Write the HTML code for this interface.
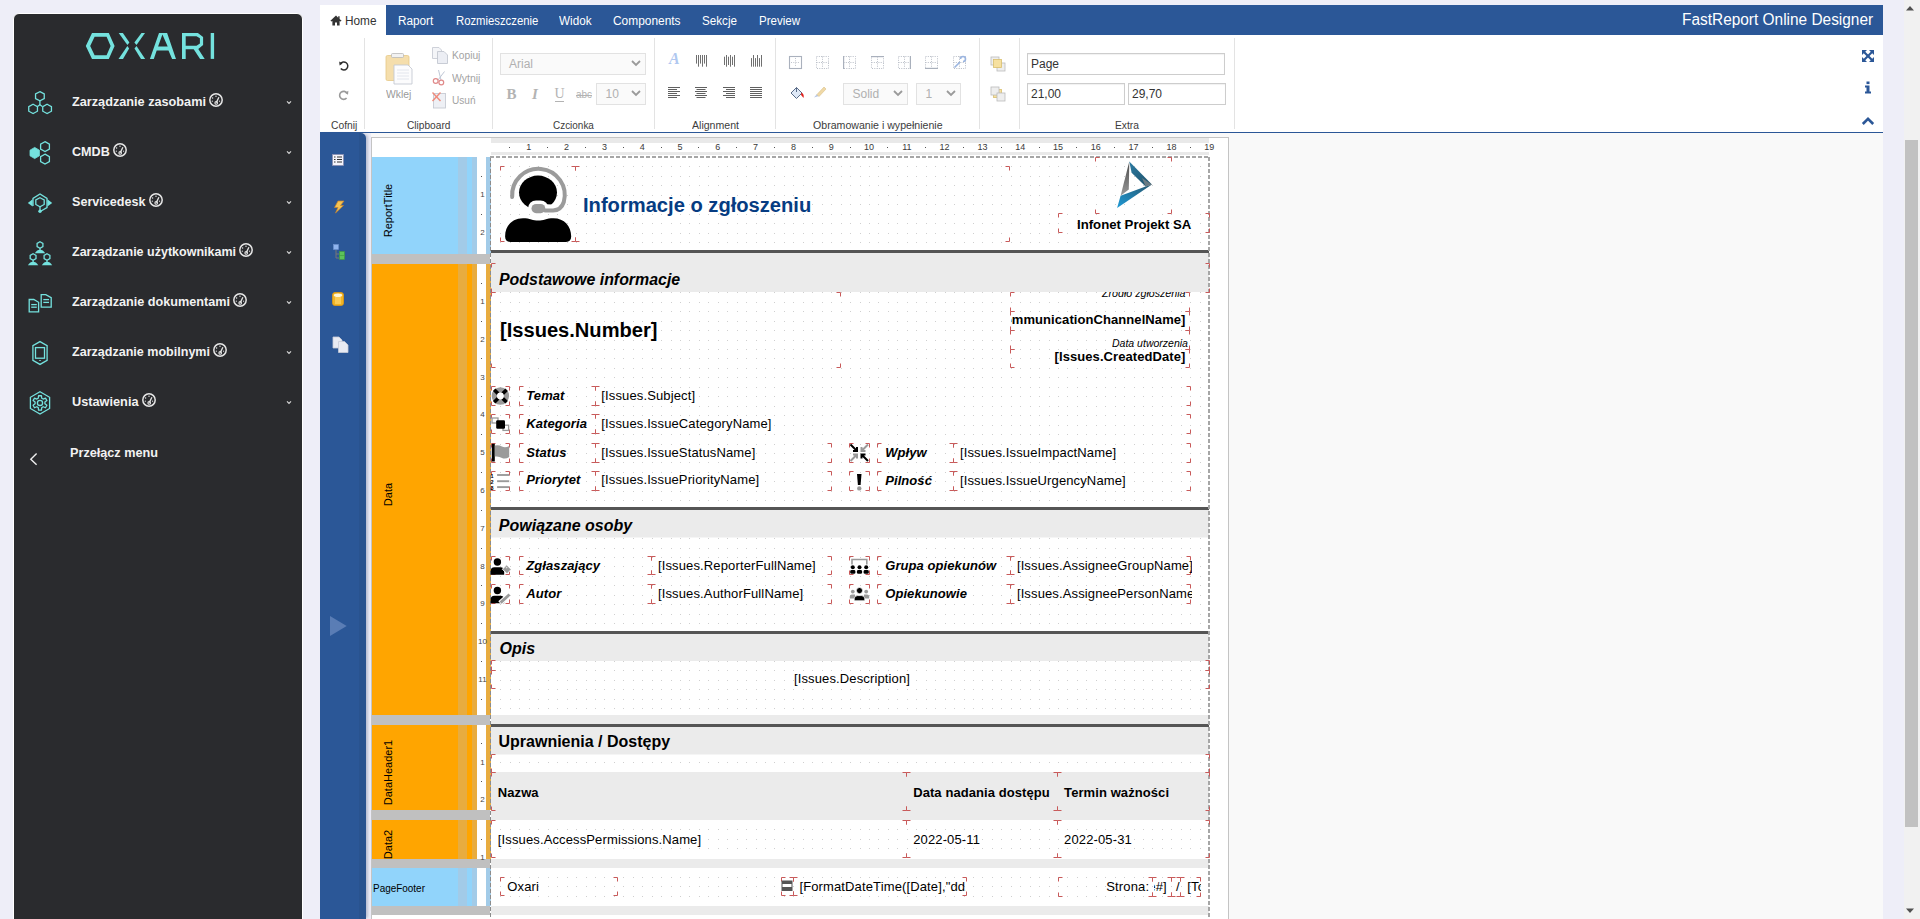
<!DOCTYPE html>
<html><head><meta charset="utf-8"><title>FastReport</title>
<style>
*{margin:0;padding:0;box-sizing:border-box}
html,body{width:1920px;height:919px;overflow:hidden;background:#eeeef8;font-family:"Liberation Sans",sans-serif;position:relative}
.a{position:absolute;display:block}
.t{position:absolute;white-space:nowrap;line-height:1;transform-origin:0 0}
svg{overflow:visible}
</style></head><body>
<div class="a" style="left:13px;top:13px;width:290px;height:930px;background:#2a2b2e;border:1px solid #fff;border-radius:6px;"></div>
<svg class="a" style="left:0;top:0" width="300" height="80"><path d="M85.8,46 L92,33 L108.8,33 L114.6,46 L108.8,58.9 L92,58.9 Z M90.2,46 L94.6,36.7 L106.6,36.7 L110.6,46 L106.6,55.2 L94.6,55.2 Z" fill="#74e2de" fill-rule="evenodd"/><polygon points="118.7,33.1 122.9,33.1 129.4,42.4 127.4,45" fill="#74e2de" fill-rule="evenodd"/><polygon points="127.4,46 129.1,48.5 123,58.9 118.5,58.9" fill="#74e2de" fill-rule="evenodd"/><polygon points="141.5,33.1 145,33.1 136.5,45 134.4,42.4" fill="#74e2de" fill-rule="evenodd"/><polygon points="136.5,46 134.5,48.6 141,58.9 145.2,58.9" fill="#74e2de" fill-rule="evenodd"/><path d="M149.9,58.9 L159,33 L167.1,33 L176,58.9 L172.1,58.9 L168.5,50.4 L156.7,50.4 L153.8,58.9 Z M158.1,46.6 L162.4,34.6 L167.7,46.6 Z" fill="#74e2de" fill-rule="evenodd"/><path d="M182,33 L197.9,33 L203.1,37.1 L203.1,44.9 L198.3,49 L204.7,58.9 L200.1,58.9 L193.7,49.3 L185.7,49.3 L185.7,58.9 L182,58.9 Z M185.7,36.2 L196.5,36.2 L199.9,38.3 L199.9,43.5 L196.5,45.8 L185.7,45.8 Z" fill="#74e2de" fill-rule="evenodd"/><rect x="210.7" y="33" width="3.4" height="25.9" fill="#74e2de"/></svg>
<svg class="a" style="left:24px;top:85px;" width="32" height="32" viewBox="0 0 32 32"><polygon points="15.9,6.65 20.25,8.95 20.25,13.55 15.9,15.85 11.55,13.55 11.55,8.95" stroke="#74e2de" stroke-width="1.3" fill="none"/><polygon points="9.1,19.299999999999997 13.45,21.599999999999998 13.45,26.2 9.1,28.5 4.75,26.2 4.75,21.599999999999998" stroke="#74e2de" stroke-width="1.3" fill="none"/><polygon points="23.1,19.299999999999997 27.450000000000003,21.599999999999998 27.450000000000003,26.2 23.1,28.5 18.75,26.2 18.75,21.599999999999998" stroke="#74e2de" stroke-width="1.3" fill="none"/><polyline points="13.45,21.6 15.9,19.8 18.35,21.6" stroke="#74e2de" stroke-width="1.3" fill="none"/><line x1="15.9" y1="15.9" x2="15.9" y2="19.9" stroke="#74e2de" stroke-width="1.3" fill="none"/></svg>
<div class="t" style="left:71.60px;top:95.20px;font-size:13px;color:#f2f2f2;font-weight:bold;transform:scaleX(0.9761);">Zarządzanie zasobami</div>
<svg class="a" style="left:209.2px;top:93px;" width="14" height="14" viewBox="0 0 14 14"><circle cx="7" cy="7" r="6.2" fill="none" stroke="#e6e6e6" stroke-width="1.5"/><circle cx="3.6" cy="5" r="0.7" fill="#e6e6e6"/><circle cx="7" cy="3.3" r="0.7" fill="#e6e6e6"/><circle cx="3.3" cy="8.2" r="0.6" fill="#e6e6e6"/><circle cx="10.6" cy="8.2" r="0.6" fill="#e6e6e6"/><line x1="7.3" y1="9.6" x2="9.9" y2="4.3" stroke="#e6e6e6" stroke-width="1.3"/><circle cx="7.2" cy="9.9" r="1.3" fill="none" stroke="#e6e6e6" stroke-width="1.1"/></svg>
<svg class="a" style="left:286px;top:99.5px;" width="6" height="5" viewBox="0 0 6 5"><polyline points="1,1.3 3,3.3 5,1.3" fill="none" stroke="#d8d8d8" stroke-width="1.2"/></svg>
<svg class="a" style="left:24px;top:135px;" width="32" height="32" viewBox="0 0 32 32"><polygon points="10.7,12.4 15.399999999999999,15.2 15.399999999999999,20.8 10.7,23.6 5.999999999999999,20.8 5.999999999999999,15.2" fill="#74e2de" stroke="#74e2de" stroke-width="0.8"/><polygon points="21,6.65 25.4,9.100000000000001 25.4,14.0 21,16.450000000000003 16.6,14.0 16.6,9.100000000000001" stroke="#74e2de" stroke-width="1.3" fill="none"/><polygon points="21,19.15 25.4,21.6 25.4,26.5 21,28.950000000000003 16.6,26.5 16.6,21.6" stroke="#74e2de" stroke-width="1.3" fill="none"/></svg>
<div class="t" style="left:71.60px;top:145.20px;font-size:13px;color:#f2f2f2;font-weight:bold;transform:scaleX(0.9692);">CMDB</div>
<svg class="a" style="left:112.99999999999999px;top:143px;" width="14" height="14" viewBox="0 0 14 14"><circle cx="7" cy="7" r="6.2" fill="none" stroke="#e6e6e6" stroke-width="1.5"/><circle cx="3.6" cy="5" r="0.7" fill="#e6e6e6"/><circle cx="7" cy="3.3" r="0.7" fill="#e6e6e6"/><circle cx="3.3" cy="8.2" r="0.6" fill="#e6e6e6"/><circle cx="10.6" cy="8.2" r="0.6" fill="#e6e6e6"/><line x1="7.3" y1="9.6" x2="9.9" y2="4.3" stroke="#e6e6e6" stroke-width="1.3"/><circle cx="7.2" cy="9.9" r="1.3" fill="none" stroke="#e6e6e6" stroke-width="1.1"/></svg>
<svg class="a" style="left:286px;top:149.5px;" width="6" height="5" viewBox="0 0 6 5"><polyline points="1,1.3 3,3.3 5,1.3" fill="none" stroke="#d8d8d8" stroke-width="1.2"/></svg>
<svg class="a" style="left:24px;top:185px;" width="32" height="32" viewBox="0 0 32 32"><polyline points="9,21 9,13.4 16,9 23,13.4 23,22.6 17,26" stroke="#74e2de" stroke-width="1.3" fill="none"/><polygon points="8.6,14.2 3.8,18 8.6,21.6" fill="#74e2de"/><polygon points="23.4,14.2 28.2,18 23.4,21.6" fill="#74e2de"/><polygon points="16,12.7 20.2,14.95 20.2,19.45 16,21.7 11.8,19.45 11.8,14.95" stroke="#74e2de" stroke-width="1.3" fill="none"/><line x1="16" y1="21.7" x2="16" y2="25" stroke="#74e2de" stroke-width="1.3" fill="none"/><circle cx="16" cy="26.2" r="1.7" fill="#74e2de"/></svg>
<div class="t" style="left:71.60px;top:195.20px;font-size:13px;color:#f2f2f2;font-weight:bold;transform:scaleX(0.9681);">Servicedesk</div>
<svg class="a" style="left:148.7px;top:193px;" width="14" height="14" viewBox="0 0 14 14"><circle cx="7" cy="7" r="6.2" fill="none" stroke="#e6e6e6" stroke-width="1.5"/><circle cx="3.6" cy="5" r="0.7" fill="#e6e6e6"/><circle cx="7" cy="3.3" r="0.7" fill="#e6e6e6"/><circle cx="3.3" cy="8.2" r="0.6" fill="#e6e6e6"/><circle cx="10.6" cy="8.2" r="0.6" fill="#e6e6e6"/><line x1="7.3" y1="9.6" x2="9.9" y2="4.3" stroke="#e6e6e6" stroke-width="1.3"/><circle cx="7.2" cy="9.9" r="1.3" fill="none" stroke="#e6e6e6" stroke-width="1.1"/></svg>
<svg class="a" style="left:286px;top:199.5px;" width="6" height="5" viewBox="0 0 6 5"><polyline points="1,1.3 3,3.3 5,1.3" fill="none" stroke="#d8d8d8" stroke-width="1.2"/></svg>
<svg class="a" style="left:24px;top:235px;" width="32" height="32" viewBox="0 0 32 32"><polygon points="16,6.7 18.9,8.35 18.9,11.65 16,13.3 13.1,11.65 13.1,8.35" stroke="#74e2de" stroke-width="1.3" fill="none" stroke-width="1.4"/><line x1="16" y1="13.3" x2="16" y2="15" stroke="#74e2de" stroke-width="1.3" fill="none"/><path d="M10.8,18.2 Q13,14.8 16,14.8 Q19,14.8 21.2,18.2 Z" fill="#74e2de"/><polygon points="9.1,18.7 12.0,20.35 12.0,23.65 9.1,25.3 6.199999999999999,23.65 6.199999999999999,20.35" stroke="#74e2de" stroke-width="1.3" fill="none" stroke-width="1.4"/><line x1="9.1" y1="25.3" x2="9.1" y2="27" stroke="#74e2de" stroke-width="1.3" fill="none"/><path d="M3.8999999999999995,30.2 Q6.1,26.8 9.1,26.8 Q12.1,26.8 14.3,30.2 Z" fill="#74e2de"/><polygon points="23,18.7 25.9,20.35 25.9,23.65 23,25.3 20.1,23.65 20.1,20.35" stroke="#74e2de" stroke-width="1.3" fill="none" stroke-width="1.4"/><line x1="23" y1="25.3" x2="23" y2="27" stroke="#74e2de" stroke-width="1.3" fill="none"/><path d="M17.8,30.2 Q20,26.8 23,26.8 Q26,26.8 28.2,30.2 Z" fill="#74e2de"/></svg>
<div class="t" style="left:71.60px;top:245.20px;font-size:13px;color:#f2f2f2;font-weight:bold;transform:scaleX(0.9619);">Zarządzanie użytkownikami</div>
<svg class="a" style="left:239.2px;top:243px;" width="14" height="14" viewBox="0 0 14 14"><circle cx="7" cy="7" r="6.2" fill="none" stroke="#e6e6e6" stroke-width="1.5"/><circle cx="3.6" cy="5" r="0.7" fill="#e6e6e6"/><circle cx="7" cy="3.3" r="0.7" fill="#e6e6e6"/><circle cx="3.3" cy="8.2" r="0.6" fill="#e6e6e6"/><circle cx="10.6" cy="8.2" r="0.6" fill="#e6e6e6"/><line x1="7.3" y1="9.6" x2="9.9" y2="4.3" stroke="#e6e6e6" stroke-width="1.3"/><circle cx="7.2" cy="9.9" r="1.3" fill="none" stroke="#e6e6e6" stroke-width="1.1"/></svg>
<svg class="a" style="left:286px;top:249.5px;" width="6" height="5" viewBox="0 0 6 5"><polyline points="1,1.3 3,3.3 5,1.3" fill="none" stroke="#d8d8d8" stroke-width="1.2"/></svg>
<svg class="a" style="left:24px;top:285px;" width="32" height="32" viewBox="0 0 32 32"><path d="M5.2,14.5 L9.8,14.5 L14.6,17.3 L14.6,26.9 L5.2,26.9 Z" stroke="#74e2de" stroke-width="1.3" fill="none" stroke-width="1.5"/><line x1="7.2" y1="19.6" x2="12.8" y2="19.6" stroke="#74e2de" stroke-width="1.3" fill="none" stroke-width="1.1"/><line x1="7.2" y1="22.2" x2="12.8" y2="22.2" stroke="#74e2de" stroke-width="1.3" fill="none" stroke-width="1.1"/><path d="M17.2,9.7 L21.8,9.7 L27.2,12.7 L27.2,22.2 L17.2,22.2 Z" stroke="#74e2de" stroke-width="1.3" fill="none" stroke-width="1.5"/><line x1="19.3" y1="14.6" x2="25" y2="14.6" stroke="#74e2de" stroke-width="1.3" fill="none" stroke-width="1.1"/><line x1="19.3" y1="17.4" x2="25" y2="17.4" stroke="#74e2de" stroke-width="1.3" fill="none" stroke-width="1.1"/></svg>
<div class="t" style="left:71.60px;top:295.20px;font-size:13px;color:#f2f2f2;font-weight:bold;transform:scaleX(0.9720);">Zarządzanie dokumentami</div>
<svg class="a" style="left:233.2px;top:293px;" width="14" height="14" viewBox="0 0 14 14"><circle cx="7" cy="7" r="6.2" fill="none" stroke="#e6e6e6" stroke-width="1.5"/><circle cx="3.6" cy="5" r="0.7" fill="#e6e6e6"/><circle cx="7" cy="3.3" r="0.7" fill="#e6e6e6"/><circle cx="3.3" cy="8.2" r="0.6" fill="#e6e6e6"/><circle cx="10.6" cy="8.2" r="0.6" fill="#e6e6e6"/><line x1="7.3" y1="9.6" x2="9.9" y2="4.3" stroke="#e6e6e6" stroke-width="1.3"/><circle cx="7.2" cy="9.9" r="1.3" fill="none" stroke="#e6e6e6" stroke-width="1.1"/></svg>
<svg class="a" style="left:286px;top:299.5px;" width="6" height="5" viewBox="0 0 6 5"><polyline points="1,1.3 3,3.3 5,1.3" fill="none" stroke="#d8d8d8" stroke-width="1.2"/></svg>
<svg class="a" style="left:24px;top:335px;" width="32" height="32" viewBox="0 0 32 32"><polygon points="16,6.6 23.1,10.6 23.1,25.4 16,29.4 8.9,25.4 8.9,10.6" stroke="#74e2de" stroke-width="1.3" fill="none" stroke-width="1.4"/><rect x="11.5" y="12.6" width="9" height="10.6" stroke="#74e2de" stroke-width="1.3" fill="none"/><ellipse cx="16" cy="25.5" rx="1" ry="0.6" fill="#74e2de"/></svg>
<div class="t" style="left:71.60px;top:345.20px;font-size:13px;color:#f2f2f2;font-weight:bold;transform:scaleX(0.9648);">Zarządzanie mobilnymi</div>
<svg class="a" style="left:213.2px;top:343px;" width="14" height="14" viewBox="0 0 14 14"><circle cx="7" cy="7" r="6.2" fill="none" stroke="#e6e6e6" stroke-width="1.5"/><circle cx="3.6" cy="5" r="0.7" fill="#e6e6e6"/><circle cx="7" cy="3.3" r="0.7" fill="#e6e6e6"/><circle cx="3.3" cy="8.2" r="0.6" fill="#e6e6e6"/><circle cx="10.6" cy="8.2" r="0.6" fill="#e6e6e6"/><line x1="7.3" y1="9.6" x2="9.9" y2="4.3" stroke="#e6e6e6" stroke-width="1.3"/><circle cx="7.2" cy="9.9" r="1.3" fill="none" stroke="#e6e6e6" stroke-width="1.1"/></svg>
<svg class="a" style="left:286px;top:349.5px;" width="6" height="5" viewBox="0 0 6 5"><polyline points="1,1.3 3,3.3 5,1.3" fill="none" stroke="#d8d8d8" stroke-width="1.2"/></svg>
<svg class="a" style="left:24px;top:385px;" width="32" height="32" viewBox="0 0 32 32"><polygon points="16,6.699999999999999 25.6,12.299999999999999 25.6,23.5 16,29.099999999999998 6.4,23.5 6.4,12.299999999999999" stroke="#74e2de" stroke-width="1.3" fill="none" stroke-width="1.4"/><polygon points="14.24,13.22 14.55,10.75 17.45,10.75 17.76,13.22 19.17,14.03 21.47,13.07 22.92,15.58 20.93,17.09 20.93,18.71 22.92,20.22 21.47,22.73 19.17,21.77 17.76,22.58 17.45,25.05 14.55,25.05 14.24,22.58 12.83,21.77 10.53,22.73 9.08,20.22 11.07,18.71 11.07,17.09 9.08,15.58 10.53,13.07 12.83,14.03" stroke="#74e2de" stroke-width="1.3" fill="none" stroke-width="1.3" stroke-linejoin="round"/><circle cx="16" cy="17.9" r="2.6" stroke="#74e2de" stroke-width="1.3" fill="none" stroke-width="1.3"/></svg>
<div class="t" style="left:71.60px;top:395.20px;font-size:13px;color:#f2f2f2;font-weight:bold;transform:scaleX(0.9791);">Ustawienia</div>
<svg class="a" style="left:141.7px;top:393px;" width="14" height="14" viewBox="0 0 14 14"><circle cx="7" cy="7" r="6.2" fill="none" stroke="#e6e6e6" stroke-width="1.5"/><circle cx="3.6" cy="5" r="0.7" fill="#e6e6e6"/><circle cx="7" cy="3.3" r="0.7" fill="#e6e6e6"/><circle cx="3.3" cy="8.2" r="0.6" fill="#e6e6e6"/><circle cx="10.6" cy="8.2" r="0.6" fill="#e6e6e6"/><line x1="7.3" y1="9.6" x2="9.9" y2="4.3" stroke="#e6e6e6" stroke-width="1.3"/><circle cx="7.2" cy="9.9" r="1.3" fill="none" stroke="#e6e6e6" stroke-width="1.1"/></svg>
<svg class="a" style="left:286px;top:399.5px;" width="6" height="5" viewBox="0 0 6 5"><polyline points="1,1.3 3,3.3 5,1.3" fill="none" stroke="#d8d8d8" stroke-width="1.2"/></svg>
<div class="t" style="left:69.80px;top:446.00px;font-size:13px;color:#f2f2f2;font-weight:bold;transform:scaleX(0.9742);">Przełącz menu</div>
<svg class="a" style="left:28px;top:451px;" width="12" height="16" viewBox="0 0 12 16"><polyline points="8.6,2.6 2.8,8.2 8.6,13.8" fill="none" stroke="#eee" stroke-width="1.4"/></svg>
<div class="a" style="left:320px;top:5px;width:1563px;height:30px;background:#2b5797;"></div>
<div class="a" style="left:320px;top:5px;width:66px;height:30px;background:#fff;"></div>
<svg class="a" style="left:330px;top:15px;" width="12" height="11" viewBox="0 0 12 11"><path d="M6,0.6 L0.4,5.8 L1.6,6.6 L2.4,6 L2.4,10.6 L5,10.6 L5,7.6 L7,7.6 L7,10.6 L9.6,10.6 L9.6,6 L10.4,6.6 L11.6,5.8 L9.6,4 L9.6,1.2 L8.2,1.2 L8.2,2.7 Z" fill="#333"/></svg>
<div class="t" style="left:345.00px;top:15.04px;font-size:12px;color:#333;transform:scaleX(0.9839);">Home</div>
<div class="t" style="left:398.00px;top:15.04px;font-size:12px;color:#fff;transform:scaleX(0.9801);">Raport</div>
<div class="t" style="left:455.50px;top:15.04px;font-size:12px;color:#fff;transform:scaleX(0.9419);">Rozmieszczenie</div>
<div class="t" style="left:559.00px;top:15.04px;font-size:12px;color:#fff;transform:scaleX(0.9747);">Widok</div>
<div class="t" style="left:613.00px;top:15.04px;font-size:12px;color:#fff;transform:scaleX(0.9922);">Components</div>
<div class="t" style="left:701.50px;top:15.04px;font-size:12px;color:#fff;transform:scaleX(0.9718);">Sekcje</div>
<div class="t" style="left:758.50px;top:15.04px;font-size:12px;color:#fff;transform:scaleX(0.9605);">Preview</div>
<div class="t" style="left:1681.50px;top:12.46px;font-size:16px;color:#fff;transform:scaleX(0.9638);">FastReport Online Designer</div>
<div class="a" style="left:320px;top:35px;width:1563px;height:97px;background:#fff;"></div>
<div class="a" style="left:320px;top:132px;width:1563px;height:1px;background:#2b5797;"></div>
<div class="a" style="left:364px;top:38px;width:1px;height:91px;background:#e3e3e3;"></div>
<div class="a" style="left:492px;top:38px;width:1px;height:91px;background:#e3e3e3;"></div>
<div class="a" style="left:654px;top:38px;width:1px;height:91px;background:#e3e3e3;"></div>
<div class="a" style="left:775px;top:38px;width:1px;height:91px;background:#e3e3e3;"></div>
<div class="a" style="left:979px;top:38px;width:1px;height:91px;background:#e3e3e3;"></div>
<div class="a" style="left:1019px;top:38px;width:1px;height:91px;background:#e3e3e3;"></div>
<div class="a" style="left:1234px;top:38px;width:1px;height:91px;background:#e3e3e3;"></div>
<div class="t" style="left:330.65px;top:120.29px;font-size:11px;color:#3c3c3c;transform:scaleX(0.9351);">Cofnij</div>
<div class="t" style="left:406.60px;top:120.29px;font-size:11px;color:#3c3c3c;transform:scaleX(0.9216);">Clipboard</div>
<div class="t" style="left:553.05px;top:120.29px;font-size:11px;color:#3c3c3c;transform:scaleX(0.9039);">Czcionka</div>
<div class="t" style="left:691.70px;top:120.29px;font-size:11px;color:#3c3c3c;transform:scaleX(0.9604);">Alignment</div>
<div class="t" style="left:813.20px;top:120.29px;font-size:11px;color:#3c3c3c;transform:scaleX(0.9631);">Obramowanie i wypełnienie</div>
<div class="t" style="left:1115.30px;top:120.29px;font-size:11px;color:#3c3c3c;transform:scaleX(0.9343);">Extra</div>
<svg class="a" style="left:334px;top:56px;" width="20" height="48" viewBox="0 0 20 48"><path d="M6.4,7.8 A4,4 0 1 1 6.8,12.6" fill="none" stroke="#2e2e2e" stroke-width="1.5"/><polygon points="5.2,5.4 8.6,7.4 5.6,9.4" fill="#2e2e2e"/><path d="M13,37.2 A4,4 0 1 0 12.6,42" fill="none" stroke="#9a9a9a" stroke-width="1.6"/><polygon points="14.4,34.8 11,36.8 14,38.8" fill="#9a9a9a"/></svg>
<svg class="a" style="left:384px;top:52px;" width="30" height="34" viewBox="0 0 30 34"><rect x="2" y="3.5" width="23" height="25" rx="1.5" fill="#f5deac" stroke="#e6c887" stroke-width="0.8"/><rect x="7.5" y="1.5" width="12" height="4" rx="1" fill="#f2f2f2" stroke="#b9b9b9" stroke-width="0.8"/><path d="M10,13 L24,13 L28,17 L28,32 L10,32 Z" fill="#fcfcfd" stroke="#c5c9d3" stroke-width="0.9"/><g stroke="#dde1e8" stroke-width="0.8"><line x1="13" y1="18" x2="25" y2="18"/><line x1="13" y1="21" x2="25" y2="21"/><line x1="13" y1="24" x2="25" y2="24"/><line x1="13" y1="27" x2="25" y2="27"/></g></svg>
<div class="t" style="left:386.00px;top:88.59px;font-size:11px;color:#9a9a9a;transform:scaleX(0.9414);">Wklej</div>
<svg class="a" style="left:431px;top:46px;" width="18" height="18" viewBox="0 0 18 18"><path d="M1.5,1.5 L8,1.5 L10.5,4 L10.5,12.5 L1.5,12.5 Z" fill="#f4f5f8" stroke="#c8ccd5" stroke-width="0.9"/><path d="M6.5,5.5 L13,5.5 L16.5,9 L16.5,17.5 L6.5,17.5 Z" fill="#eceef4" stroke="#c3c7d0" stroke-width="0.9"/></svg>
<div class="t" style="left:451.60px;top:49.79px;font-size:11px;color:#a3a3a3;transform:scaleX(0.9283);">Kopiuj</div>
<svg class="a" style="left:432px;top:69px;" width="16" height="17" viewBox="0 0 16 17"><line x1="6.5" y1="1" x2="9" y2="11" stroke="#bfc7d6" stroke-width="1"/><line x1="12.5" y1="2.5" x2="6" y2="11" stroke="#bfc7d6" stroke-width="1"/><circle cx="3.7" cy="12" r="2.4" fill="none" stroke="#e08a8a" stroke-width="1.2"/><circle cx="9.3" cy="13.5" r="2.4" fill="none" stroke="#e08a8a" stroke-width="1.2"/></svg>
<div class="t" style="left:451.60px;top:72.59px;font-size:11px;color:#a3a3a3;transform:scaleX(0.9516);">Wytnij</div>
<svg class="a" style="left:432px;top:92px;" width="16" height="18" viewBox="0 0 16 18"><rect x="1.5" y="1.5" width="12" height="14.5" fill="#eef0f5" stroke="#c6cad3" stroke-width="0.9"/><line x1="0.5" y1="0.5" x2="8.5" y2="9" stroke="#f08a7a" stroke-width="1.4"/><line x1="8.5" y1="0.5" x2="0.5" y2="9" stroke="#f08a7a" stroke-width="1.4"/></svg>
<div class="t" style="left:451.60px;top:95.29px;font-size:11px;color:#a3a3a3;transform:scaleX(0.9187);">Usuń</div>
<div class="a" style="left:500px;top:53px;width:146px;height:22px;background:#fafafa;border:1px solid #e2e2e2;box-sizing:border-box;"></div>
<div class="t" style="left:509.00px;top:58.04px;font-size:12px;color:#b0b0b0;">Arial</div>
<svg class="a" style="left:631px;top:60px;" width="10" height="7" viewBox="0 0 10 7"><polyline points="1,1 5,5 9,1" fill="none" stroke="#9a9a9a" stroke-width="1.8"/></svg>
<div class="a" style="left:596px;top:83px;width:50px;height:22px;background:#fafafa;border:1px solid #e2e2e2;box-sizing:border-box;"></div>
<div class="t" style="left:605.50px;top:88.04px;font-size:12px;color:#b0b0b0;">10</div>
<svg class="a" style="left:631px;top:90px;" width="10" height="7" viewBox="0 0 10 7"><polyline points="1,1 5,5 9,1" fill="none" stroke="#9a9a9a" stroke-width="1.8"/></svg>
<div class="t" style="left:506.50px;top:86.60px;font-size:15px;color:#b3b3b3;font-weight:bold;font-family:'Liberation Serif',serif;">B</div>
<div class="t" style="left:532.00px;top:86.60px;font-size:15px;color:#b3b3b3;font-weight:bold;font-style:italic;font-family:'Liberation Serif',serif;">I</div>
<div class="t" style="left:554.50px;top:87.45px;font-size:14px;color:#b3b3b3;font-family:'Liberation Serif',serif;">U</div>
<div class="a" style="left:555px;top:101px;width:9px;height:1px;background:#b3b3b3;"></div>
<div class="t" style="left:576.00px;top:89.53px;font-size:10px;color:#b3b3b3;transform:scaleX(0.9922);">abc</div>
<div class="a" style="left:576px;top:95px;width:16px;height:1px;background:#b3b3b3;"></div>
<div class="t" style="left:669.00px;top:51.46px;font-size:16px;color:#b0c8f0;font-weight:bold;font-style:italic;font-family:'Liberation Serif',serif;">A</div>
<svg class="a" style="left:696px;top:55px;" width="12" height="12" viewBox="0 0 12 12"><line x1="0.5" y1="0" x2="0.5" y2="8.6" stroke="#707070" stroke-width="1"/><line x1="2.5" y1="0" x2="2.5" y2="11.7" stroke="#707070" stroke-width="1"/><line x1="4.5" y1="0" x2="4.5" y2="8.6" stroke="#707070" stroke-width="1"/><line x1="6.5" y1="0" x2="6.5" y2="11.7" stroke="#707070" stroke-width="1"/><line x1="8.5" y1="0" x2="8.5" y2="8.6" stroke="#707070" stroke-width="1"/><line x1="10.5" y1="0" x2="10.5" y2="11.7" stroke="#707070" stroke-width="1"/></svg>
<svg class="a" style="left:724px;top:55px;" width="12" height="12" viewBox="0 0 12 12"><line x1="0.5" y1="1.7" x2="0.5" y2="10" stroke="#707070" stroke-width="1"/><line x1="2.5" y1="0" x2="2.5" y2="11.7" stroke="#707070" stroke-width="1"/><line x1="4.5" y1="1.7" x2="4.5" y2="10" stroke="#707070" stroke-width="1"/><line x1="6.5" y1="0" x2="6.5" y2="11.7" stroke="#707070" stroke-width="1"/><line x1="8.5" y1="1.7" x2="8.5" y2="10" stroke="#707070" stroke-width="1"/><line x1="10.5" y1="0" x2="10.5" y2="11.7" stroke="#707070" stroke-width="1"/></svg>
<svg class="a" style="left:751px;top:55px;" width="12" height="12" viewBox="0 0 12 12"><line x1="0.5" y1="3.1" x2="0.5" y2="11.7" stroke="#707070" stroke-width="1"/><line x1="2.5" y1="0" x2="2.5" y2="11.7" stroke="#707070" stroke-width="1"/><line x1="4.5" y1="3.1" x2="4.5" y2="11.7" stroke="#707070" stroke-width="1"/><line x1="6.5" y1="0" x2="6.5" y2="11.7" stroke="#707070" stroke-width="1"/><line x1="8.5" y1="3.1" x2="8.5" y2="11.7" stroke="#707070" stroke-width="1"/><line x1="10.5" y1="0" x2="10.5" y2="11.7" stroke="#707070" stroke-width="1"/></svg>
<svg class="a" style="left:668px;top:87px;" width="12" height="12" viewBox="0 0 12 12"><line x1="0" y1="0.5" x2="12" y2="0.5" stroke="#606060" stroke-width="1"/><line x1="0" y1="2.5" x2="9" y2="2.5" stroke="#606060" stroke-width="1"/><line x1="0" y1="4.5" x2="12" y2="4.5" stroke="#606060" stroke-width="1"/><line x1="0" y1="6.5" x2="9" y2="6.5" stroke="#606060" stroke-width="1"/><line x1="0" y1="8.5" x2="12" y2="8.5" stroke="#606060" stroke-width="1"/><line x1="0" y1="10.5" x2="9" y2="10.5" stroke="#606060" stroke-width="1"/></svg>
<svg class="a" style="left:695px;top:87px;" width="12" height="12" viewBox="0 0 12 12"><line x1="0" y1="0.5" x2="12" y2="0.5" stroke="#606060" stroke-width="1"/><line x1="1.5" y1="2.5" x2="10.5" y2="2.5" stroke="#606060" stroke-width="1"/><line x1="0" y1="4.5" x2="12" y2="4.5" stroke="#606060" stroke-width="1"/><line x1="1.5" y1="6.5" x2="10.5" y2="6.5" stroke="#606060" stroke-width="1"/><line x1="0" y1="8.5" x2="12" y2="8.5" stroke="#606060" stroke-width="1"/><line x1="1.5" y1="10.5" x2="10.5" y2="10.5" stroke="#606060" stroke-width="1"/></svg>
<svg class="a" style="left:723px;top:87px;" width="12" height="12" viewBox="0 0 12 12"><line x1="0" y1="0.5" x2="12" y2="0.5" stroke="#606060" stroke-width="1"/><line x1="3" y1="2.5" x2="12" y2="2.5" stroke="#606060" stroke-width="1"/><line x1="0" y1="4.5" x2="12" y2="4.5" stroke="#606060" stroke-width="1"/><line x1="3" y1="6.5" x2="12" y2="6.5" stroke="#606060" stroke-width="1"/><line x1="0" y1="8.5" x2="12" y2="8.5" stroke="#606060" stroke-width="1"/><line x1="3" y1="10.5" x2="12" y2="10.5" stroke="#606060" stroke-width="1"/></svg>
<svg class="a" style="left:750px;top:87px;" width="12" height="12" viewBox="0 0 12 12"><line x1="0" y1="0.5" x2="12" y2="0.5" stroke="#606060" stroke-width="1"/><line x1="0" y1="2.5" x2="12" y2="2.5" stroke="#606060" stroke-width="1"/><line x1="0" y1="4.5" x2="12" y2="4.5" stroke="#606060" stroke-width="1"/><line x1="0" y1="6.5" x2="12" y2="6.5" stroke="#606060" stroke-width="1"/><line x1="0" y1="8.5" x2="12" y2="8.5" stroke="#606060" stroke-width="1"/><line x1="0" y1="10.5" x2="12" y2="10.5" stroke="#606060" stroke-width="1"/></svg>
<svg class="a" style="left:789px;top:56px;" width="13" height="13" viewBox="0 0 13 13"><rect x="0.5" y="0.5" width="12" height="12" fill="none" stroke="#aab1bd" stroke-width="1.1"/><g stroke="#c0c4cc" stroke-dasharray="1,1.3"><line x1="6.5" y1="2" x2="6.5" y2="11"/><line x1="2" y1="6.5" x2="11" y2="6.5"/></g></svg>
<svg class="a" style="left:816px;top:56px;" width="13" height="13" viewBox="0 0 13 13"><g fill="none" stroke="#b8bdc6" stroke-width="1" stroke-dasharray="1,1.3"><rect x="0.5" y="0.5" width="12" height="12"/><line x1="6.5" y1="0.5" x2="6.5" y2="12.5"/><line x1="0.5" y1="6.5" x2="12.5" y2="6.5"/></g></svg>
<svg class="a" style="left:843px;top:56px;" width="13" height="13" viewBox="0 0 13 13"><g fill="none" stroke="#b8bdc6" stroke-width="1" stroke-dasharray="1,1.3"><rect x="0.5" y="0.5" width="12" height="12"/><line x1="6.5" y1="0.5" x2="6.5" y2="12.5"/><line x1="0.5" y1="6.5" x2="12.5" y2="6.5"/></g><line x1="0.6" y1="0" x2="0.6" y2="13" stroke="#a9b0bc" stroke-width="1.2"/></svg>
<svg class="a" style="left:871px;top:56px;" width="13" height="13" viewBox="0 0 13 13"><g fill="none" stroke="#b8bdc6" stroke-width="1" stroke-dasharray="1,1.3"><rect x="0.5" y="0.5" width="12" height="12"/><line x1="6.5" y1="0.5" x2="6.5" y2="12.5"/><line x1="0.5" y1="6.5" x2="12.5" y2="6.5"/></g><line x1="0" y1="0.6" x2="13" y2="0.6" stroke="#a9b0bc" stroke-width="1.2"/></svg>
<svg class="a" style="left:898px;top:56px;" width="13" height="13" viewBox="0 0 13 13"><g fill="none" stroke="#b8bdc6" stroke-width="1" stroke-dasharray="1,1.3"><rect x="0.5" y="0.5" width="12" height="12"/><line x1="6.5" y1="0.5" x2="6.5" y2="12.5"/><line x1="0.5" y1="6.5" x2="12.5" y2="6.5"/></g><line x1="12.4" y1="0" x2="12.4" y2="13" stroke="#a9b0bc" stroke-width="1.2"/></svg>
<svg class="a" style="left:925px;top:56px;" width="13" height="13" viewBox="0 0 13 13"><g fill="none" stroke="#b8bdc6" stroke-width="1" stroke-dasharray="1,1.3"><rect x="0.5" y="0.5" width="12" height="12"/><line x1="6.5" y1="0.5" x2="6.5" y2="12.5"/><line x1="0.5" y1="6.5" x2="12.5" y2="6.5"/></g><line x1="0" y1="12.4" x2="13" y2="12.4" stroke="#a9b0bc" stroke-width="1.2"/></svg>
<svg class="a" style="left:953px;top:56px;" width="13" height="13" viewBox="0 0 13 13"><g fill="none" stroke="#b8bdc6" stroke-width="1" stroke-dasharray="1,1.3"><rect x="0.5" y="0.5" width="12" height="12"/><line x1="6.5" y1="0.5" x2="6.5" y2="12.5"/><line x1="0.5" y1="6.5" x2="12.5" y2="6.5"/></g><path d="M1.5,11.5 L7,6 M7.5,3 A2.5,2.5 0 1 1 10,5.5" stroke="#9bb5e0" stroke-width="1.6" fill="none"/></svg>
<svg class="a" style="left:789px;top:85px;" width="16" height="15" viewBox="0 0 16 15"><path d="M2,8 L7.5,2.5 L13,8 L7.5,13.5 Z" fill="#dfe9f7" stroke="#5a6c88" stroke-width="1"/><path d="M7.5,2.5 L7.5,7" stroke="#5a6c88" stroke-width="1"/><path d="M12.5,7.5 Q15.5,9 14.5,13 Q13,11 12,10 Z" fill="#e0201b"/></svg>
<svg class="a" style="left:813px;top:85px;" width="15" height="14" viewBox="0 0 15 14"><path d="M1,12.5 L4,9 L6,11 Z" fill="#b9c8e6"/><path d="M4,9.5 L11,2 L13,4 L6,11.5 Z" fill="#f0d9a6" stroke="#d8bf88" stroke-width="0.6"/></svg>
<div class="a" style="left:843px;top:83px;width:65px;height:22px;background:#fafafa;border:1px solid #e2e2e2;box-sizing:border-box;"></div>
<div class="t" style="left:852.50px;top:88.04px;font-size:12px;color:#b0b0b0;">Solid</div>
<svg class="a" style="left:893px;top:90px;" width="10" height="7" viewBox="0 0 10 7"><polyline points="1,1 5,5 9,1" fill="none" stroke="#9a9a9a" stroke-width="1.8"/></svg>
<div class="a" style="left:916px;top:83px;width:45px;height:22px;background:#fafafa;border:1px solid #e2e2e2;box-sizing:border-box;"></div>
<div class="t" style="left:925.50px;top:88.04px;font-size:12px;color:#b0b0b0;">1</div>
<svg class="a" style="left:946px;top:90px;" width="10" height="7" viewBox="0 0 10 7"><polyline points="1,1 5,5 9,1" fill="none" stroke="#9a9a9a" stroke-width="1.8"/></svg>
<svg class="a" style="left:990px;top:56px;" width="16" height="16" viewBox="0 0 16 16"><rect x="1" y="1" width="8" height="8" fill="#eee" stroke="#bbb" stroke-width="0.8"/><rect x="7" y="7" width="8" height="8" fill="#eee" stroke="#bbb" stroke-width="0.8"/><rect x="3.5" y="3.5" width="8" height="8" fill="#f6e0a0" stroke="#d9bf6e" stroke-width="0.8"/></svg>
<svg class="a" style="left:990px;top:86px;" width="16" height="16" viewBox="0 0 16 16"><rect x="3.5" y="3.5" width="8" height="8" fill="#f6e0a0" stroke="#d9bf6e" stroke-width="0.8"/><rect x="1" y="1" width="8" height="8" fill="#eee" stroke="#bbb" stroke-width="0.8"/><rect x="7" y="7" width="8" height="8" fill="#eee" stroke="#bbb" stroke-width="0.8"/></svg>
<div class="a" style="left:1027px;top:53px;width:198px;height:22px;background:#fff;border:1px solid #cdcdcd;box-shadow:inset 0 1px 1px rgba(0,0,0,0.06);box-sizing:border-box;"></div>
<div class="t" style="left:1031.00px;top:58.34px;font-size:12px;color:#333;">Page</div>
<div class="a" style="left:1027px;top:83px;width:98px;height:22px;background:#fff;border:1px solid #cdcdcd;box-shadow:inset 0 1px 1px rgba(0,0,0,0.06);box-sizing:border-box;"></div>
<div class="t" style="left:1031.00px;top:88.34px;font-size:12px;color:#333;">21,00</div>
<div class="a" style="left:1128px;top:83px;width:98px;height:22px;background:#fff;border:1px solid #cdcdcd;box-shadow:inset 0 1px 1px rgba(0,0,0,0.06);box-sizing:border-box;"></div>
<div class="t" style="left:1132.00px;top:88.34px;font-size:12px;color:#333;">29,70</div>
<svg class="a" style="left:1861px;top:49px;" width="14" height="14" viewBox="0 0 14 14"><g stroke="#2b5797" stroke-width="2.2"><line x1="2.5" y1="2.5" x2="11.5" y2="11.5"/><line x1="11.5" y1="2.5" x2="2.5" y2="11.5"/></g><g fill="#2b5797"><polygon points="1,1 6,1 1,6"/><polygon points="13,1 8,1 13,6"/><polygon points="1,13 6,13 1,8"/><polygon points="13,13 8,13 13,8"/></g></svg>
<svg class="a" style="left:1864px;top:81px;" width="8" height="13" viewBox="0 0 8 13"><rect x="2.5" y="0.5" width="3" height="2.6" fill="#2b5797"/><path d="M1,4.5 L5.5,4.5 L5.5,10.5 L7,10.5 L7,12.5 L1,12.5 L1,10.5 L2.5,10.5 L2.5,6.5 L1,6.5 Z" fill="#2b5797"/></svg>
<svg class="a" style="left:1861px;top:116px;" width="14" height="10" viewBox="0 0 14 10"><polyline points="1.8,8 7,2.8 12.2,8" fill="none" stroke="#2b5797" stroke-width="2.6"/></svg>
<div class="a" style="left:371px;top:133px;width:1512px;height:786px;background:#f9f9f9;"></div>
<div class="a" style="left:371px;top:137px;width:858px;height:790px;background:#fff;border:1px solid #c4c4c4;box-sizing:border-box;"></div>
<div class="a" style="left:491px;top:138px;width:718px;height:5px;background:#e9e9e9;"></div>
<div class="a" style="left:491px;top:152px;width:718px;height:3px;background:#e9e9e9;"></div>
<div class="t" style="left:526.30px;top:142.98px;font-size:9px;color:#3a3a3a;">1</div>
<div class="t" style="left:564.10px;top:142.98px;font-size:9px;color:#3a3a3a;">2</div>
<div class="t" style="left:601.90px;top:142.98px;font-size:9px;color:#3a3a3a;">3</div>
<div class="t" style="left:639.70px;top:142.98px;font-size:9px;color:#3a3a3a;">4</div>
<div class="t" style="left:677.50px;top:142.98px;font-size:9px;color:#3a3a3a;">5</div>
<div class="t" style="left:715.30px;top:142.98px;font-size:9px;color:#3a3a3a;">6</div>
<div class="t" style="left:753.10px;top:142.98px;font-size:9px;color:#3a3a3a;">7</div>
<div class="t" style="left:790.90px;top:142.98px;font-size:9px;color:#3a3a3a;">8</div>
<div class="t" style="left:828.70px;top:142.98px;font-size:9px;color:#3a3a3a;">9</div>
<div class="t" style="left:864.00px;top:142.98px;font-size:9px;color:#3a3a3a;">10</div>
<div class="t" style="left:902.14px;top:142.98px;font-size:9px;color:#3a3a3a;">11</div>
<div class="t" style="left:939.60px;top:142.98px;font-size:9px;color:#3a3a3a;">12</div>
<div class="t" style="left:977.40px;top:142.98px;font-size:9px;color:#3a3a3a;">13</div>
<div class="t" style="left:1015.20px;top:142.98px;font-size:9px;color:#3a3a3a;">14</div>
<div class="t" style="left:1053.00px;top:142.98px;font-size:9px;color:#3a3a3a;">15</div>
<div class="t" style="left:1090.80px;top:142.98px;font-size:9px;color:#3a3a3a;">16</div>
<div class="t" style="left:1128.60px;top:142.98px;font-size:9px;color:#3a3a3a;">17</div>
<div class="t" style="left:1166.40px;top:142.98px;font-size:9px;color:#3a3a3a;">18</div>
<div class="t" style="left:1204.20px;top:142.98px;font-size:9px;color:#3a3a3a;">19</div>
<div class="a" style="left:509px;top:147px;width:1px;height:1px;background:#555;"></div>
<div class="a" style="left:547px;top:147px;width:1px;height:1px;background:#555;"></div>
<div class="a" style="left:585px;top:147px;width:1px;height:1px;background:#555;"></div>
<div class="a" style="left:623px;top:147px;width:1px;height:1px;background:#555;"></div>
<div class="a" style="left:661px;top:147px;width:1px;height:1px;background:#555;"></div>
<div class="a" style="left:698px;top:147px;width:1px;height:1px;background:#555;"></div>
<div class="a" style="left:736px;top:147px;width:1px;height:1px;background:#555;"></div>
<div class="a" style="left:774px;top:147px;width:1px;height:1px;background:#555;"></div>
<div class="a" style="left:812px;top:147px;width:1px;height:1px;background:#555;"></div>
<div class="a" style="left:850px;top:147px;width:1px;height:1px;background:#555;"></div>
<div class="a" style="left:887px;top:147px;width:1px;height:1px;background:#555;"></div>
<div class="a" style="left:925px;top:147px;width:1px;height:1px;background:#555;"></div>
<div class="a" style="left:963px;top:147px;width:1px;height:1px;background:#555;"></div>
<div class="a" style="left:1001px;top:147px;width:1px;height:1px;background:#555;"></div>
<div class="a" style="left:1039px;top:147px;width:1px;height:1px;background:#555;"></div>
<div class="a" style="left:1076px;top:147px;width:1px;height:1px;background:#555;"></div>
<div class="a" style="left:1114px;top:147px;width:1px;height:1px;background:#555;"></div>
<div class="a" style="left:1152px;top:147px;width:1px;height:1px;background:#555;"></div>
<div class="a" style="left:1190px;top:147px;width:1px;height:1px;background:#555;"></div>
<div class="a" style="left:372px;top:254px;width:118px;height:10px;background:#c0c0c0;"></div>
<div class="a" style="left:491px;top:254px;width:718px;height:10px;background:#ebebeb;"></div>
<div class="a" style="left:372px;top:715px;width:118px;height:9.5px;background:#c0c0c0;"></div>
<div class="a" style="left:491px;top:715px;width:718px;height:9.5px;background:#ebebeb;"></div>
<div class="a" style="left:372px;top:810px;width:118px;height:10px;background:#c0c0c0;"></div>
<div class="a" style="left:491px;top:810px;width:718px;height:10px;background:#ebebeb;"></div>
<div class="a" style="left:372px;top:858.5px;width:118px;height:9.0px;background:#c0c0c0;"></div>
<div class="a" style="left:491px;top:858.5px;width:718px;height:9.0px;background:#ebebeb;"></div>
<div class="a" style="left:372px;top:906px;width:118px;height:9px;background:#c0c0c0;"></div>
<div class="a" style="left:491px;top:906px;width:718px;height:9px;background:#ebebeb;"></div>
<div class="a" style="left:372px;top:157px;width:86px;height:97px;background:#91d4fb;"></div>
<div class="a" style="left:458px;top:157px;width:9px;height:97px;background:#a2cbe8;"></div>
<div class="a" style="left:467px;top:157px;width:5px;height:97px;background:#91d4fb;"></div>
<div class="a" style="left:472px;top:157px;width:5px;height:97px;background:#a2cbe8;"></div>
<div class="a" style="left:477px;top:157px;width:9px;height:97px;background:#fff;"></div>
<div class="a" style="left:486px;top:157px;width:5px;height:97px;background:#a2cbe8;"></div>
<div class="t" style="left:480.27px;top:191.03px;font-size:8px;color:#444;">1</div>
<div class="t" style="left:480.27px;top:228.83px;font-size:8px;color:#444;">2</div>
<div class="a" style="left:481px;top:176px;width:1px;height:1px;background:#555;"></div>
<div class="a" style="left:481px;top:214px;width:1px;height:1px;background:#555;"></div>
<div class="t" style="left:361.80px;top:205.00px;font-size:11px;line-height:11px;transform:rotate(-90deg);transform-origin:50% 50%;color:#000">ReportTitle</div>
<div class="a" style="left:372px;top:264px;width:86px;height:451px;background:#ffa500;"></div>
<div class="a" style="left:458px;top:264px;width:9px;height:451px;background:#e8ac3f;"></div>
<div class="a" style="left:467px;top:264px;width:5px;height:451px;background:#ffa500;"></div>
<div class="a" style="left:472px;top:264px;width:5px;height:451px;background:#e8ac3f;"></div>
<div class="a" style="left:477px;top:264px;width:9px;height:451px;background:#fff;"></div>
<div class="a" style="left:486px;top:264px;width:5px;height:451px;background:#e8ac3f;"></div>
<div class="t" style="left:480.27px;top:298.03px;font-size:8px;color:#444;">1</div>
<div class="t" style="left:480.27px;top:335.83px;font-size:8px;color:#444;">2</div>
<div class="t" style="left:480.27px;top:373.63px;font-size:8px;color:#444;">3</div>
<div class="t" style="left:480.27px;top:411.43px;font-size:8px;color:#444;">4</div>
<div class="t" style="left:480.27px;top:449.23px;font-size:8px;color:#444;">5</div>
<div class="t" style="left:480.27px;top:487.03px;font-size:8px;color:#444;">6</div>
<div class="t" style="left:480.27px;top:524.83px;font-size:8px;color:#444;">7</div>
<div class="t" style="left:480.27px;top:562.63px;font-size:8px;color:#444;">8</div>
<div class="t" style="left:480.27px;top:600.43px;font-size:8px;color:#444;">9</div>
<div class="t" style="left:478.05px;top:638.23px;font-size:8px;color:#444;">10</div>
<div class="t" style="left:478.34px;top:676.03px;font-size:8px;color:#444;">11</div>
<div class="a" style="left:481px;top:283px;width:1px;height:1px;background:#555;"></div>
<div class="a" style="left:481px;top:321px;width:1px;height:1px;background:#555;"></div>
<div class="a" style="left:481px;top:358px;width:1px;height:1px;background:#555;"></div>
<div class="a" style="left:481px;top:396px;width:1px;height:1px;background:#555;"></div>
<div class="a" style="left:481px;top:434px;width:1px;height:1px;background:#555;"></div>
<div class="a" style="left:481px;top:472px;width:1px;height:1px;background:#555;"></div>
<div class="a" style="left:481px;top:510px;width:1px;height:1px;background:#555;"></div>
<div class="a" style="left:481px;top:548px;width:1px;height:1px;background:#555;"></div>
<div class="a" style="left:481px;top:585px;width:1px;height:1px;background:#555;"></div>
<div class="a" style="left:481px;top:623px;width:1px;height:1px;background:#555;"></div>
<div class="a" style="left:481px;top:661px;width:1px;height:1px;background:#555;"></div>
<div class="a" style="left:481px;top:699px;width:1px;height:1px;background:#555;"></div>
<div class="t" style="left:376.88px;top:489.00px;font-size:11px;line-height:11px;transform:rotate(-90deg);transform-origin:50% 50%;color:#000">Data</div>
<div class="a" style="left:372px;top:724.5px;width:86px;height:85.5px;background:#ffa500;"></div>
<div class="a" style="left:458px;top:724.5px;width:9px;height:85.5px;background:#e8ac3f;"></div>
<div class="a" style="left:467px;top:724.5px;width:5px;height:85.5px;background:#ffa500;"></div>
<div class="a" style="left:472px;top:724.5px;width:5px;height:85.5px;background:#e8ac3f;"></div>
<div class="a" style="left:477px;top:724.5px;width:9px;height:85.5px;background:#fff;"></div>
<div class="a" style="left:486px;top:724.5px;width:5px;height:85.5px;background:#e8ac3f;"></div>
<div class="t" style="left:480.27px;top:758.53px;font-size:8px;color:#444;">1</div>
<div class="t" style="left:480.27px;top:796.33px;font-size:8px;color:#444;">2</div>
<div class="a" style="left:481px;top:743px;width:1px;height:1px;background:#555;"></div>
<div class="a" style="left:481px;top:781px;width:1px;height:1px;background:#555;"></div>
<div class="t" style="left:355.77px;top:766.75px;font-size:11px;line-height:11px;transform:rotate(-90deg);transform-origin:50% 50%;color:#000">DataHeader1</div>
<div class="a" style="left:372px;top:820px;width:86px;height:38.5px;background:#ffa500;"></div>
<div class="a" style="left:458px;top:820px;width:9px;height:38.5px;background:#e8ac3f;"></div>
<div class="a" style="left:467px;top:820px;width:5px;height:38.5px;background:#ffa500;"></div>
<div class="a" style="left:472px;top:820px;width:5px;height:38.5px;background:#e8ac3f;"></div>
<div class="a" style="left:477px;top:820px;width:9px;height:38.5px;background:#fff;"></div>
<div class="a" style="left:486px;top:820px;width:5px;height:38.5px;background:#e8ac3f;"></div>
<div class="t" style="left:480.27px;top:854.03px;font-size:8px;color:#444;">1</div>
<div class="a" style="left:481px;top:839px;width:1px;height:1px;background:#555;"></div>
<div class="t" style="left:373.81px;top:838.75px;font-size:11px;line-height:11px;transform:rotate(-90deg);transform-origin:50% 50%;color:#000">Data2</div>
<div class="a" style="left:372px;top:867.5px;width:86px;height:38.5px;background:#91d4fb;"></div>
<div class="a" style="left:458px;top:867.5px;width:9px;height:38.5px;background:#a2cbe8;"></div>
<div class="a" style="left:467px;top:867.5px;width:5px;height:38.5px;background:#91d4fb;"></div>
<div class="a" style="left:472px;top:867.5px;width:5px;height:38.5px;background:#a2cbe8;"></div>
<div class="a" style="left:477px;top:867.5px;width:9px;height:38.5px;background:#fff;"></div>
<div class="a" style="left:486px;top:867.5px;width:5px;height:38.5px;background:#a2cbe8;"></div>
<div class="t" style="left:372.60px;top:882.59px;font-size:11px;color:#000;transform:scaleX(0.9039);">PageFooter</div>
<div class="a" style="left:372px;top:915px;width:837px;height:4px;background:#fff;"></div>
<svg class="a" style="left:0;top:0" width="1920" height="919"><defs><path id="drow" d="M500,0h1v1h-1zM510,0h1v1h-1zM519,0h1v1h-1zM529,0h1v1h-1zM538,0h1v1h-1zM548,0h1v1h-1zM557,0h1v1h-1zM567,0h1v1h-1zM576,0h1v1h-1zM586,0h1v1h-1zM595,0h1v1h-1zM604,0h1v1h-1zM614,0h1v1h-1zM623,0h1v1h-1zM633,0h1v1h-1zM642,0h1v1h-1zM652,0h1v1h-1zM661,0h1v1h-1zM671,0h1v1h-1zM680,0h1v1h-1zM689,0h1v1h-1zM699,0h1v1h-1zM708,0h1v1h-1zM718,0h1v1h-1zM727,0h1v1h-1zM737,0h1v1h-1zM746,0h1v1h-1zM756,0h1v1h-1zM765,0h1v1h-1zM774,0h1v1h-1zM784,0h1v1h-1zM793,0h1v1h-1zM803,0h1v1h-1zM812,0h1v1h-1zM822,0h1v1h-1zM831,0h1v1h-1zM841,0h1v1h-1zM850,0h1v1h-1zM860,0h1v1h-1zM869,0h1v1h-1zM878,0h1v1h-1zM888,0h1v1h-1zM897,0h1v1h-1zM907,0h1v1h-1zM916,0h1v1h-1zM926,0h1v1h-1zM935,0h1v1h-1zM945,0h1v1h-1zM954,0h1v1h-1zM964,0h1v1h-1zM973,0h1v1h-1zM982,0h1v1h-1zM992,0h1v1h-1zM1001,0h1v1h-1zM1011,0h1v1h-1zM1020,0h1v1h-1zM1030,0h1v1h-1zM1039,0h1v1h-1zM1049,0h1v1h-1zM1058,0h1v1h-1zM1067,0h1v1h-1zM1077,0h1v1h-1zM1086,0h1v1h-1zM1096,0h1v1h-1zM1105,0h1v1h-1zM1115,0h1v1h-1zM1124,0h1v1h-1zM1134,0h1v1h-1zM1143,0h1v1h-1zM1152,0h1v1h-1zM1162,0h1v1h-1zM1171,0h1v1h-1zM1181,0h1v1h-1zM1190,0h1v1h-1zM1200,0h1v1h-1z" fill="#cfcfcf"/></defs><use href="#drow" y="166"/><use href="#drow" y="176"/><use href="#drow" y="185"/><use href="#drow" y="195"/><use href="#drow" y="204"/><use href="#drow" y="214"/><use href="#drow" y="223"/><use href="#drow" y="233"/><use href="#drow" y="242"/><use href="#drow" y="252"/><use href="#drow" y="273"/><use href="#drow" y="283"/><use href="#drow" y="292"/><use href="#drow" y="302"/><use href="#drow" y="311"/><use href="#drow" y="321"/><use href="#drow" y="330"/><use href="#drow" y="340"/><use href="#drow" y="349"/><use href="#drow" y="358"/><use href="#drow" y="368"/><use href="#drow" y="377"/><use href="#drow" y="387"/><use href="#drow" y="396"/><use href="#drow" y="406"/><use href="#drow" y="415"/><use href="#drow" y="425"/><use href="#drow" y="434"/><use href="#drow" y="444"/><use href="#drow" y="453"/><use href="#drow" y="462"/><use href="#drow" y="472"/><use href="#drow" y="481"/><use href="#drow" y="491"/><use href="#drow" y="500"/><use href="#drow" y="510"/><use href="#drow" y="519"/><use href="#drow" y="529"/><use href="#drow" y="538"/><use href="#drow" y="548"/><use href="#drow" y="557"/><use href="#drow" y="566"/><use href="#drow" y="576"/><use href="#drow" y="585"/><use href="#drow" y="595"/><use href="#drow" y="604"/><use href="#drow" y="614"/><use href="#drow" y="623"/><use href="#drow" y="633"/><use href="#drow" y="642"/><use href="#drow" y="651"/><use href="#drow" y="661"/><use href="#drow" y="670"/><use href="#drow" y="680"/><use href="#drow" y="689"/><use href="#drow" y="699"/><use href="#drow" y="708"/><use href="#drow" y="734"/><use href="#drow" y="743"/><use href="#drow" y="753"/><use href="#drow" y="762"/><use href="#drow" y="772"/><use href="#drow" y="781"/><use href="#drow" y="791"/><use href="#drow" y="800"/><use href="#drow" y="829"/><use href="#drow" y="839"/><use href="#drow" y="848"/><use href="#drow" y="877"/><use href="#drow" y="886"/><use href="#drow" y="896"/><rect x="491" y="253" width="718" height="39" fill="#ebebeb"/><rect x="491" y="510" width="718" height="27.5" fill="#ebebeb"/><rect x="491" y="634" width="718" height="27" fill="#ebebeb"/><rect x="491" y="727" width="718" height="27.5" fill="#ebebeb"/><rect x="491" y="772" width="718" height="38.60000000000002" fill="#ebebeb"/><rect x="491" y="250" width="718" height="3" fill="#555"/><rect x="491" y="507" width="718" height="3" fill="#555"/><rect x="491" y="631" width="718" height="3" fill="#555"/><rect x="491" y="724" width="718" height="3" fill="#555"/><line x1="490.5" y1="157" x2="490.5" y2="919" stroke="#8c8c8c" stroke-width="1" stroke-dasharray="4,2"/><line x1="490" y1="157" x2="1210" y2="157" stroke="#a6a6a6" stroke-width="2" stroke-dasharray="4,2"/><line x1="1209" y1="157" x2="1209" y2="919" stroke="#a6a6a6" stroke-width="2" stroke-dasharray="4,2"/><path d="M505.1,236.5 C505.1,226 512,218.2 523,218.2 C530,218.2 533,220.6 538.2,220.6 C543.4,220.6 546.4,218.2 553.4,218.2 C564.4,218.2 571.2,226 571.2,236.5 C571.2,240 569.4,241.9 566,241.9 L510.3,241.9 C506.9,241.9 505.1,240 505.1,236.5 Z" fill="#000"/><ellipse cx="538" cy="192.6" rx="19" ry="17" fill="#000"/><path d="M538,208.6 L553,209 Q559,208.5 562,204" fill="none" stroke="#fff" stroke-width="9" stroke-linecap="round"/><rect x="528" y="200.5" width="20.5" height="16" rx="8" fill="#fff"/><path d="M512.2,197 A26.3,26.3 0 1 1 563.8,202 Q561,210.4 553,210.4 L545,210.4" fill="none" stroke="#9b9b9b" stroke-width="4" stroke-linecap="round"/><rect x="531.5" y="204" width="13.8" height="9.2" rx="4.6" fill="#9b9b9b"/><defs><linearGradient id="lg1" x1="0" y1="0" x2="0" y2="1"><stop offset="0" stop-color="#4a4a4a"/><stop offset="1" stop-color="#9a9a9a"/></linearGradient><linearGradient id="lg2" x1="0" y1="0" x2="1" y2="1"><stop offset="0" stop-color="#2b7ba3"/><stop offset="1" stop-color="#1f4f66"/></linearGradient><linearGradient id="lg3" x1="0" y1="1" x2="1" y2="0"><stop offset="0" stop-color="#1e9ad6"/><stop offset="1" stop-color="#27566e"/></linearGradient></defs><polygon points="1129.3,161.4 1128.8,189.5 1120.6,195.8" fill="url(#lg1)"/><polygon points="1129.3,161.4 1151.9,184.4 1145.6,186.6 1131.6,172.8" fill="url(#lg2)"/><polygon points="1117.1,207.9 1120.6,195.8 1145.6,186.6 1151.9,184.4" fill="url(#lg3)"/><polygon points="1142,178 1151.9,184.4 1145.6,186.6" fill="#8a8a8a" opacity="0.7"/><path d="M500.5,170.5 V166.5 H504.5 M571.5,166.5 H575.5 V170.5 M575.5,237.5 V241.5 H571.5 M504.5,241.5 H500.5 V237.5" stroke="#c85a5a" stroke-width="1" fill="none"/><path d="M575.5,170.5 V166.5 H579.5 M1005.5,166.5 H1009.5 V170.5 M1009.5,237.5 V241.5 H1005.5 M579.5,241.5 H575.5 V237.5" stroke="#c85a5a" stroke-width="1" fill="none"/><path d="M1095.5,161.5 V157.5 H1099.5 M1167.5,157.5 H1171.5 V161.5 M1171.5,209.5 V213.5 H1167.5 M1099.5,213.5 H1095.5 V209.5" stroke="#c85a5a" stroke-width="1" fill="none"/><path d="M1058.5,217.5 V213.5 H1062.5 M1205.5,213.5 H1209.5 V217.5 M1209.5,228.5 V232.5 H1205.5 M1062.5,232.5 H1058.5 V228.5" stroke="#c85a5a" stroke-width="1" fill="none"/><path d="M491.5,267.5 V263.5 H495.5 M1205.5,263.5 H1209.5 V267.5 M1209.5,288.5 V292.5 H1205.5 M495.5,292.5 H491.5 V288.5" stroke="#c85a5a" stroke-width="1" fill="none"/><path d="M491.5,296.5 V292.5 H495.5 M836.5,292.5 H840.5 V296.5 M840.5,363.5 V367.5 H836.5 M495.5,367.5 H491.5 V363.5" stroke="#c85a5a" stroke-width="1" fill="none"/><path d="M1010.5,296.5 V292.5 H1014.5 M1185.5,292.5 H1189.5 V296.5 M1189.5,307.5 V311.5 H1185.5 M1014.5,311.5 H1010.5 V307.5" stroke="#c85a5a" stroke-width="1" fill="none"/><path d="M1010.5,315.5 V311.5 H1014.5 M1185.5,311.5 H1189.5 V315.5 M1189.5,326.5 V330.5 H1185.5 M1014.5,330.5 H1010.5 V326.5" stroke="#c85a5a" stroke-width="1" fill="none"/><path d="M1010.5,334.5 V330.5 H1014.5 M1185.5,330.5 H1189.5 V334.5 M1189.5,345.5 V349.5 H1185.5 M1014.5,349.5 H1010.5 V345.5" stroke="#c85a5a" stroke-width="1" fill="none"/><path d="M1010.5,353.5 V349.5 H1014.5 M1185.5,349.5 H1189.5 V353.5 M1189.5,363.5 V367.5 H1185.5 M1014.5,367.5 H1010.5 V363.5" stroke="#c85a5a" stroke-width="1" fill="none"/><path d="M491.5,390.5 V386.5 H495.5 M505.5,386.5 H509.5 V390.5 M509.5,401.5 V405.5 H505.5 M495.5,405.5 H491.5 V401.5" stroke="#c85a5a" stroke-width="1" fill="none"/><path d="M519.5,390.5 V386.5 H523.5 M591.5,386.5 H595.5 V390.5 M595.5,401.5 V405.5 H591.5 M523.5,405.5 H519.5 V401.5" stroke="#c85a5a" stroke-width="1" fill="none"/><path d="M595.5,390.5 V386.5 H599.5 M1186.5,386.5 H1190.5 V390.5 M1190.5,401.5 V405.5 H1186.5 M599.5,405.5 H595.5 V401.5" stroke="#c85a5a" stroke-width="1" fill="none"/><path d="M491.5,418.5 V414.5 H495.5 M505.5,414.5 H509.5 V418.5 M509.5,429.5 V433.5 H505.5 M495.5,433.5 H491.5 V429.5" stroke="#c85a5a" stroke-width="1" fill="none"/><path d="M519.5,418.5 V414.5 H523.5 M591.5,414.5 H595.5 V418.5 M595.5,429.5 V433.5 H591.5 M523.5,433.5 H519.5 V429.5" stroke="#c85a5a" stroke-width="1" fill="none"/><path d="M595.5,418.5 V414.5 H599.5 M1186.5,414.5 H1190.5 V418.5 M1190.5,429.5 V433.5 H1186.5 M599.5,433.5 H595.5 V429.5" stroke="#c85a5a" stroke-width="1" fill="none"/><path d="M491.5,447.5 V443.5 H495.5 M505.5,443.5 H509.5 V447.5 M509.5,458.5 V462.5 H505.5 M495.5,462.5 H491.5 V458.5" stroke="#c85a5a" stroke-width="1" fill="none"/><path d="M519.5,447.5 V443.5 H523.5 M591.5,443.5 H595.5 V447.5 M595.5,458.5 V462.5 H591.5 M523.5,462.5 H519.5 V458.5" stroke="#c85a5a" stroke-width="1" fill="none"/><path d="M595.5,447.5 V443.5 H599.5 M827.5,443.5 H831.5 V447.5 M831.5,458.5 V462.5 H827.5 M599.5,462.5 H595.5 V458.5" stroke="#c85a5a" stroke-width="1" fill="none"/><path d="M849.5,447.5 V443.5 H853.5 M865.5,443.5 H869.5 V447.5 M869.5,458.5 V462.5 H865.5 M853.5,462.5 H849.5 V458.5" stroke="#c85a5a" stroke-width="1" fill="none"/><path d="M877.5,447.5 V443.5 H881.5 M949.5,443.5 H953.5 V447.5 M953.5,458.5 V462.5 H949.5 M881.5,462.5 H877.5 V458.5" stroke="#c85a5a" stroke-width="1" fill="none"/><path d="M953.5,447.5 V443.5 H957.5 M1186.5,443.5 H1190.5 V447.5 M1190.5,458.5 V462.5 H1186.5 M957.5,462.5 H953.5 V458.5" stroke="#c85a5a" stroke-width="1" fill="none"/><path d="M491.5,475.5 V471.5 H495.5 M505.5,471.5 H509.5 V475.5 M509.5,486.5 V490.5 H505.5 M495.5,490.5 H491.5 V486.5" stroke="#c85a5a" stroke-width="1" fill="none"/><path d="M519.5,475.5 V471.5 H523.5 M591.5,471.5 H595.5 V475.5 M595.5,486.5 V490.5 H591.5 M523.5,490.5 H519.5 V486.5" stroke="#c85a5a" stroke-width="1" fill="none"/><path d="M595.5,475.5 V471.5 H599.5 M827.5,471.5 H831.5 V475.5 M831.5,486.5 V490.5 H827.5 M599.5,490.5 H595.5 V486.5" stroke="#c85a5a" stroke-width="1" fill="none"/><path d="M849.5,475.5 V471.5 H853.5 M865.5,471.5 H869.5 V475.5 M869.5,486.5 V490.5 H865.5 M853.5,490.5 H849.5 V486.5" stroke="#c85a5a" stroke-width="1" fill="none"/><path d="M877.5,475.5 V471.5 H881.5 M949.5,471.5 H953.5 V475.5 M953.5,486.5 V490.5 H949.5 M881.5,490.5 H877.5 V486.5" stroke="#c85a5a" stroke-width="1" fill="none"/><path d="M953.5,475.5 V471.5 H957.5 M1186.5,471.5 H1190.5 V475.5 M1190.5,486.5 V490.5 H1186.5 M957.5,490.5 H953.5 V486.5" stroke="#c85a5a" stroke-width="1" fill="none"/><path d="M491.5,560.5 V556.5 H495.5 M505.5,556.5 H509.5 V560.5 M509.5,570.5 V574.5 H505.5 M495.5,574.5 H491.5 V570.5" stroke="#c85a5a" stroke-width="1" fill="none"/><path d="M519.5,560.5 V556.5 H523.5 M647.5,556.5 H651.5 V560.5 M651.5,570.5 V574.5 H647.5 M523.5,574.5 H519.5 V570.5" stroke="#c85a5a" stroke-width="1" fill="none"/><path d="M651.5,560.5 V556.5 H655.5 M827.5,556.5 H831.5 V560.5 M831.5,570.5 V574.5 H827.5 M655.5,574.5 H651.5 V570.5" stroke="#c85a5a" stroke-width="1" fill="none"/><path d="M849.5,560.5 V556.5 H853.5 M865.5,556.5 H869.5 V560.5 M869.5,570.5 V574.5 H865.5 M853.5,574.5 H849.5 V570.5" stroke="#c85a5a" stroke-width="1" fill="none"/><path d="M877.5,560.5 V556.5 H881.5 M1006.5,556.5 H1010.5 V560.5 M1010.5,570.5 V574.5 H1006.5 M881.5,574.5 H877.5 V570.5" stroke="#c85a5a" stroke-width="1" fill="none"/><path d="M1010.5,560.5 V556.5 H1014.5 M1186.5,556.5 H1190.5 V560.5 M1190.5,570.5 V574.5 H1186.5 M1014.5,574.5 H1010.5 V570.5" stroke="#c85a5a" stroke-width="1" fill="none"/><path d="M491.5,588.5 V584.5 H495.5 M505.5,584.5 H509.5 V588.5 M509.5,599.5 V603.5 H505.5 M495.5,603.5 H491.5 V599.5" stroke="#c85a5a" stroke-width="1" fill="none"/><path d="M519.5,588.5 V584.5 H523.5 M647.5,584.5 H651.5 V588.5 M651.5,599.5 V603.5 H647.5 M523.5,603.5 H519.5 V599.5" stroke="#c85a5a" stroke-width="1" fill="none"/><path d="M651.5,588.5 V584.5 H655.5 M827.5,584.5 H831.5 V588.5 M831.5,599.5 V603.5 H827.5 M655.5,603.5 H651.5 V599.5" stroke="#c85a5a" stroke-width="1" fill="none"/><path d="M849.5,588.5 V584.5 H853.5 M865.5,584.5 H869.5 V588.5 M869.5,599.5 V603.5 H865.5 M853.5,603.5 H849.5 V599.5" stroke="#c85a5a" stroke-width="1" fill="none"/><path d="M877.5,588.5 V584.5 H881.5 M1006.5,584.5 H1010.5 V588.5 M1010.5,599.5 V603.5 H1006.5 M881.5,603.5 H877.5 V599.5" stroke="#c85a5a" stroke-width="1" fill="none"/><path d="M1010.5,588.5 V584.5 H1014.5 M1186.5,584.5 H1190.5 V588.5 M1190.5,599.5 V603.5 H1186.5 M1014.5,603.5 H1010.5 V599.5" stroke="#c85a5a" stroke-width="1" fill="none"/><path d="M491.5,664.5 V660.5 H495.5 M1205.5,660.5 H1209.5 V664.5 M1209.5,666.5 V670.5 H1205.5 M495.5,670.5 H491.5 V666.5" stroke="#c85a5a" stroke-width="1" fill="none"/><path d="M491.5,674.5 V670.5 H495.5 M1205.5,670.5 H1209.5 V674.5 M1209.5,684.5 V688.5 H1205.5 M495.5,688.5 H491.5 V684.5" stroke="#c85a5a" stroke-width="1" fill="none"/><path d="M491.5,758.5 V754.5 H495.5 M1205.5,754.5 H1209.5 V758.5 M1209.5,768.5 V772.5 H1205.5 M495.5,772.5 H491.5 V768.5" stroke="#c85a5a" stroke-width="1" fill="none"/><path d="M491.5,776.5 V772.5 H495.5 M902.5,772.5 H906.5 V776.5 M906.5,806.5 V810.5 H902.5 M495.5,810.5 H491.5 V806.5" stroke="#c85a5a" stroke-width="1" fill="none"/><path d="M906.5,776.5 V772.5 H910.5 M1053.5,772.5 H1057.5 V776.5 M1057.5,806.5 V810.5 H1053.5 M910.5,810.5 H906.5 V806.5" stroke="#c85a5a" stroke-width="1" fill="none"/><path d="M1057.5,776.5 V772.5 H1061.5 M1205.5,772.5 H1209.5 V776.5 M1209.5,806.5 V810.5 H1205.5 M1061.5,810.5 H1057.5 V806.5" stroke="#c85a5a" stroke-width="1" fill="none"/><path d="M491.5,824.5 V820.5 H495.5 M902.5,820.5 H906.5 V824.5 M906.5,853.5 V857.5 H902.5 M495.5,857.5 H491.5 V853.5" stroke="#c85a5a" stroke-width="1" fill="none"/><path d="M906.5,824.5 V820.5 H910.5 M1053.5,820.5 H1057.5 V824.5 M1057.5,853.5 V857.5 H1053.5 M910.5,857.5 H906.5 V853.5" stroke="#c85a5a" stroke-width="1" fill="none"/><path d="M1057.5,824.5 V820.5 H1061.5 M1205.5,820.5 H1209.5 V824.5 M1209.5,853.5 V857.5 H1205.5 M1061.5,857.5 H1057.5 V853.5" stroke="#c85a5a" stroke-width="1" fill="none"/><path d="M500.5,881.5 V877.5 H504.5 M613.5,877.5 H617.5 V881.5 M617.5,891.5 V895.5 H613.5 M504.5,895.5 H500.5 V891.5" stroke="#c85a5a" stroke-width="1" fill="none"/><path d="M781.5,881.5 V877.5 H785.5 M789.5,877.5 H793.5 V881.5 M793.5,891.5 V895.5 H789.5 M785.5,895.5 H781.5 V891.5" stroke="#c85a5a" stroke-width="1" fill="none"/><path d="M793.5,881.5 V877.5 H797.5 M962.5,877.5 H966.5 V881.5 M966.5,891.5 V895.5 H962.5 M797.5,895.5 H793.5 V891.5" stroke="#c85a5a" stroke-width="1" fill="none"/><path d="M1058.5,881.5 V877.5 H1062.5 M1148.5,877.5 H1152.5 V881.5 M1152.5,892.5 V896.5 H1148.5 M1062.5,896.5 H1058.5 V892.5" stroke="#c85a5a" stroke-width="1" fill="none"/><path d="M1152.5,881.5 V877.5 H1156.5 M1167.5,877.5 H1171.5 V881.5 M1171.5,892.5 V896.5 H1167.5 M1156.5,896.5 H1152.5 V892.5" stroke="#c85a5a" stroke-width="1" fill="none"/><path d="M1171.5,881.5 V877.5 H1175.5 M1176.5,877.5 H1180.5 V881.5 M1180.5,892.5 V896.5 H1176.5 M1175.5,896.5 H1171.5 V892.5" stroke="#c85a5a" stroke-width="1" fill="none"/><path d="M1180.5,881.5 V877.5 H1184.5 M1196.5,877.5 H1200.5 V881.5 M1200.5,892.5 V896.5 H1196.5 M1184.5,896.5 H1180.5 V892.5" stroke="#c85a5a" stroke-width="1" fill="none"/><g transform="translate(500.4,396)"><circle r="8.7" fill="#9a9a9a"/><path d="M-6.2,-6.2 L-2.2,-2.2 M6.2,-6.2 L2.2,-2.2 M-6.2,6.2 L-2.2,2.2 M6.2,6.2 L2.2,2.2" stroke="#000" stroke-width="3.6"/><circle r="3.4" fill="#fff"/></g><rect x="492" y="418" width="6" height="5" fill="none" stroke="#9a9a9a" stroke-width="1.3"/><rect x="503" y="425.2" width="5.6" height="5.2" fill="none" stroke="#9a9a9a" stroke-width="1.3"/><rect x="496.2" y="420.2" width="8.8" height="8.5" rx="1.2" fill="#000"/><rect x="491.8" y="443.8" width="3" height="17.7" fill="#000"/><path d="M494.8,445.6 Q499,444.6 502,446.6 Q505.5,448 509.2,446 L509.2,457 Q505.5,459.4 502,458 Q499,456 494.8,456.6 Z" fill="#9a9a9a"/><g fill="#000" font-size="5.5" font-weight="bold" font-family="Liberation Sans"><text x="490.6" y="477.6">1</text><text x="490.6" y="483.8">2</text><text x="490.6" y="490">3</text></g><g stroke="#9a9a9a" stroke-width="1.9"><line x1="497.1" y1="475" x2="509.2" y2="475"/><line x1="497.1" y1="481.2" x2="509.2" y2="481.2"/><line x1="497.1" y1="487.1" x2="509.2" y2="487.1"/></g><g stroke-width="2"><path d="M850.5,444.5 L857,451 M853,451 L857,451 L857,447" stroke="#000" fill="none"/><path d="M868,461 L861.5,454.5 M865.5,454.5 L861.5,454.5 L861.5,458.5" stroke="#000" fill="none"/><path d="M868,444.5 L861.5,451 M861.5,447 L861.5,451 L865.5,451" stroke="#999" fill="none"/><path d="M850.5,461 L857,454.5 M853,454.5 L857,454.5 L857,458.5" stroke="#999" fill="none"/></g><path d="M857,474 L861.5,474 L860.6,485 L857.9,485 Z" fill="#000"/><circle cx="859.3" cy="488.4" r="2.2" fill="#999"/><g transform="translate(497.4,558.3) scale(1)" fill="#000"><circle cx="0" cy="3.7" r="3.7"/><path d="M-6.8,16.5 L-6.8,13.2 Q-6.8,9 -3,9 L3,9 Q6.8,9 6.8,13.2 L6.8,16.5 Z"/></g><path d="M502.4,569.2 L506.6,564.8 L511.2,569.4 L507,573.8 Z" fill="#9a9a9a" stroke="#fff" stroke-width="1"/><circle cx="506.6" cy="567.6" r="0.8" fill="#ddd"/><g transform="translate(497.4,586.8) scale(1)" fill="#000"><circle cx="0" cy="3.7" r="3.7"/><path d="M-6.8,16.5 L-6.8,13.2 Q-6.8,9 -3,9 L3,9 Q6.8,9 6.8,13.2 L6.8,16.5 Z"/></g><path d="M500,603.2 L509.5,594.5" stroke="#fff" stroke-width="5"/><path d="M500.6,602.6 L509.5,594.5" stroke="#9a9a9a" stroke-width="2.8"/><path d="M852,564.5 L852,559.5 L866.8,559.5 L866.8,564.5" fill="none" stroke="#9a9a9a" stroke-width="1.6"/><circle cx="852.8" cy="567.2" r="2" fill="#000"/><rect x="850.1999999999999" y="570" width="5.2" height="3.8" rx="1.4" fill="#000"/><circle cx="859.5" cy="567.2" r="2" fill="#000"/><rect x="856.9" y="570" width="5.2" height="3.8" rx="1.4" fill="#000"/><circle cx="866.2" cy="567.2" r="2" fill="#000"/><rect x="863.6" y="570" width="5.2" height="3.8" rx="1.4" fill="#000"/><circle cx="852.8" cy="591.6" r="1.9" fill="#9a9a9a"/><circle cx="866.2" cy="591.6" r="1.9" fill="#9a9a9a"/><path d="M849.8,598.6 L849.8,596.6 Q849.8,594.6 852,594.6 L855,594.6 L855,598.6 Z" fill="#9a9a9a"/><path d="M869.2,598.6 L869.2,596.6 Q869.2,594.6 867,594.6 L864,594.6 L864,598.6 Z" fill="#9a9a9a"/><circle cx="859.5" cy="590.6" r="3.1" fill="#000" stroke="#fff" stroke-width="0.8"/><path d="M854.2,600.8 L854.2,598.8 Q854.2,595.6 857.5,595.6 L861.5,595.6 Q864.8,595.6 864.8,598.8 L864.8,600.8 Z" fill="#000" stroke="#fff" stroke-width="0.8"/><rect x="781.5" y="880.5" width="11" height="10.5" fill="#555"/><rect x="782.5" y="884" width="9" height="3" fill="#fff"/></svg>
<div class="t" style="left:582.90px;top:194.77px;font-size:20px;color:#063c82;font-weight:bold;transform:scaleX(1.0068);">Informacje o zgłoszeniu</div>
<div class="t" style="left:1077.00px;top:217.50px;font-size:13px;color:#000;font-weight:bold;transform:scaleX(1.0145);">Infonet Projekt SA</div>
<div class="t" style="left:499.00px;top:271.96px;font-size:16px;color:#000;font-weight:bold;font-style:italic;transform:scaleX(0.9939);">Podstawowe informacje</div>
<div class="t" style="left:499.50px;top:319.97px;font-size:20px;color:#000;font-weight:bold;transform:scaleX(1.0050);">[Issues.Number]</div>
<div class="a" style="left:1011px;top:292px;width:180px;height:80px;overflow:hidden"><div class="t" style="left:90.50px;top:-4.01px;font-size:11px;color:#000;font-style:italic;transform:scaleX(0.9681);">Źródło zgłoszenia</div>
<div class="t" style="left:-65.81px;top:20.60px;font-size:13px;color:#000;font-weight:bold;letter-spacing:0.08px;">[Issues.CommunicationChannelName]</div>
<div class="t" style="left:101.00px;top:45.69px;font-size:11px;color:#000;font-style:italic;transform:scaleX(0.9556);">Data utworzenia</div>
<div class="t" style="left:43.54px;top:58.10px;font-size:13px;color:#000;font-weight:bold;letter-spacing:0.08px;">[Issues.CreatedDate]</div>
</div>
<div class="t" style="left:526.30px;top:389.00px;font-size:13px;color:#000;font-weight:bold;font-style:italic;letter-spacing:0.08px;">Temat</div>
<div class="t" style="left:601.30px;top:389.00px;font-size:13px;color:#000;letter-spacing:0.13px;">[Issues.Subject]</div>
<div class="t" style="left:526.30px;top:416.70px;font-size:13px;color:#000;font-weight:bold;font-style:italic;letter-spacing:0.08px;">Kategoria</div>
<div class="t" style="left:601.30px;top:416.70px;font-size:13px;color:#000;letter-spacing:0.13px;">[Issues.IssueCategoryName]</div>
<div class="t" style="left:526.30px;top:445.60px;font-size:13px;color:#000;font-weight:bold;font-style:italic;letter-spacing:0.08px;">Status</div>
<div class="t" style="left:601.30px;top:445.60px;font-size:13px;color:#000;letter-spacing:0.13px;">[Issues.IssueStatusName]</div>
<div class="t" style="left:526.30px;top:473.40px;font-size:13px;color:#000;font-weight:bold;font-style:italic;letter-spacing:0.08px;">Priorytet</div>
<div class="t" style="left:601.30px;top:473.40px;font-size:13px;color:#000;letter-spacing:0.13px;">[Issues.IssuePriorityName]</div>
<div class="t" style="left:885.20px;top:445.50px;font-size:13px;color:#000;font-weight:bold;font-style:italic;letter-spacing:0.08px;">Wpływ</div>
<div class="t" style="left:960.00px;top:445.50px;font-size:13px;color:#000;letter-spacing:0.13px;">[Issues.IssueImpactName]</div>
<div class="t" style="left:885.20px;top:473.60px;font-size:13px;color:#000;font-weight:bold;font-style:italic;letter-spacing:0.08px;">Pilność</div>
<div class="t" style="left:960.00px;top:473.60px;font-size:13px;color:#000;letter-spacing:0.13px;">[Issues.IssueUrgencyName]</div>
<div class="t" style="left:498.80px;top:517.76px;font-size:16px;color:#000;font-weight:bold;font-style:italic;">Powiązane osoby</div>
<div class="t" style="left:526.30px;top:558.60px;font-size:13px;color:#000;font-weight:bold;font-style:italic;letter-spacing:0.08px;">Zgłaszający</div>
<div class="t" style="left:658.00px;top:558.60px;font-size:13px;color:#000;letter-spacing:0.13px;">[Issues.ReporterFullName]</div>
<div class="t" style="left:526.30px;top:586.60px;font-size:13px;color:#000;font-weight:bold;font-style:italic;letter-spacing:0.08px;">Autor</div>
<div class="t" style="left:658.00px;top:586.60px;font-size:13px;color:#000;letter-spacing:0.13px;">[Issues.AuthorFullName]</div>
<div class="t" style="left:885.20px;top:558.60px;font-size:13px;color:#000;font-weight:bold;font-style:italic;letter-spacing:0.08px;">Grupa opiekunów</div>
<div class="a" style="left:1000px;top:550px;width:192px;height:60px;overflow:hidden"><div class="t" style="left:16.90px;top:8.60px;font-size:13px;color:#000;letter-spacing:0.13px;">[Issues.AssigneeGroupName]</div>
<div class="t" style="left:16.90px;top:36.60px;font-size:13px;color:#000;letter-spacing:0.13px;">[Issues.AssigneePersonName]</div>
</div>
<div class="t" style="left:885.20px;top:586.60px;font-size:13px;color:#000;font-weight:bold;font-style:italic;letter-spacing:0.08px;">Opiekunowie</div>
<div class="t" style="left:499.50px;top:640.96px;font-size:16px;color:#000;font-weight:bold;font-style:italic;">Opis</div>
<div class="t" style="left:793.97px;top:672.30px;font-size:13px;color:#000;letter-spacing:0.13px;">[Issues.Description]</div>
<div class="t" style="left:498.50px;top:733.56px;font-size:16px;color:#000;font-weight:bold;">Uprawnienia / Dostępy</div>
<div class="t" style="left:497.80px;top:785.60px;font-size:13px;color:#000;font-weight:bold;letter-spacing:0.08px;">Nazwa</div>
<div class="t" style="left:913.20px;top:785.60px;font-size:13px;color:#000;font-weight:bold;letter-spacing:0.08px;">Data nadania dostępu</div>
<div class="t" style="left:1064.10px;top:785.60px;font-size:13px;color:#000;font-weight:bold;letter-spacing:0.08px;">Termin ważności</div>
<div class="t" style="left:497.80px;top:832.50px;font-size:13px;color:#000;letter-spacing:0.13px;">[Issues.AccessPermissions.Name]</div>
<div class="t" style="left:913.20px;top:832.50px;font-size:13px;color:#000;letter-spacing:0.13px;">2022-05-11</div>
<div class="t" style="left:1064.10px;top:832.50px;font-size:13px;color:#000;letter-spacing:0.13px;">2022-05-31</div>
<div class="t" style="left:507.30px;top:879.70px;font-size:13px;color:#000;letter-spacing:0.13px;">Oxari</div>
<div class="a" style="left:795px;top:875px;width:171px;height:25px;overflow:hidden"><div class="t" style="left:4.40px;top:4.70px;font-size:13px;color:#000;letter-spacing:0.13px;">[FormatDateTime([Date],"dd.MM.yyyy")]</div>
</div>
<div class="t" style="left:1106.30px;top:879.70px;font-size:13px;color:#000;letter-spacing:0.13px;">Strona:</div>
<div class="a" style="left:1154px;top:875px;width:14px;height:25px;overflow:hidden"><div class="t" style="left:-32.94px;top:4.70px;font-size:13px;color:#000;letter-spacing:0.13px;">[Page#]</div>
</div>
<div class="t" style="left:1176.00px;top:879.70px;font-size:13px;color:#000;letter-spacing:0.13px;">/</div>
<div class="a" style="left:1182px;top:875px;width:19px;height:25px;overflow:hidden"><div class="t" style="left:5.30px;top:4.70px;font-size:13px;color:#000;letter-spacing:0.13px;">[TotalPages#]</div>
</div>
<div class="a" style="left:320px;top:133px;width:46px;height:786px;background:linear-gradient(to right,#2b5797 0,#2b5797 39px,#29538f 39px);border-top-right-radius:5px;box-shadow:3px 0 3px -1px rgba(60,80,120,0.3);"></div>
<svg class="a" style="left:332px;top:154px;" width="12" height="12" viewBox="0 0 12 12"><rect x="0.5" y="0.5" width="11" height="11" fill="#f4f4fb" stroke="#8a8fb0" stroke-width="0.8"/><g stroke="#333" stroke-width="1"><line x1="2" y1="3" x2="3.5" y2="3"/><line x1="2" y1="5.5" x2="3.5" y2="5.5"/><line x1="2" y1="8" x2="3.5" y2="8"/><line x1="5" y1="3" x2="10" y2="3"/><line x1="5" y1="5.5" x2="10" y2="5.5"/><line x1="5" y1="8" x2="10" y2="8"/></g></svg>
<svg class="a" style="left:333px;top:200px;" width="12" height="14" viewBox="0 0 12 14"><path d="M5,1 L11,1 L7.5,5.5 L10.5,5.5 L2.5,13 L5,7.5 L1.5,7.5 Z" fill="#f5c452" stroke="#c9822a" stroke-width="0.7"/></svg>
<svg class="a" style="left:333px;top:244px;" width="12" height="16" viewBox="0 0 12 16"><rect x="0.5" y="0.5" width="5" height="5" fill="#8fb4ee" stroke="#6f93cf" stroke-width="0.6"/><path d="M3,6 L3,14 L6,14 M3,10 L6,10" stroke="#777" stroke-width="1" fill="none"/><rect x="6.5" y="7.5" width="5" height="5" fill="#5cc35a" stroke="#3e9c3c" stroke-width="0.6"/><rect x="6.5" y="11.5" width="5" height="4" fill="#5cc35a" stroke="#3e9c3c" stroke-width="0.6"/></svg>
<svg class="a" style="left:332px;top:292px;" width="12" height="14" viewBox="0 0 12 14"><rect x="0.5" y="0.5" width="11" height="13" rx="2.5" fill="#f0b526" stroke="#e49a10" stroke-width="0.8"/><ellipse cx="6" cy="3.3" rx="4.2" ry="1.8" fill="#fff6d6"/><rect x="3" y="5" width="6" height="7" fill="#ffd66a" opacity="0.7"/></svg>
<svg class="a" style="left:332px;top:336px;" width="17" height="17" viewBox="0 0 17 17"><path d="M1,1 L7,1 L10,4 L10,12 L1,12 Z" fill="#e9ebf3" stroke="#c8ccd8" stroke-width="0.8"/><path d="M6.5,5.5 L12.5,5.5 L16,9 L16,16.5 L6.5,16.5 Z" fill="#e9ebf3" stroke="#c8ccd8" stroke-width="0.8"/></svg>
<svg class="a" style="left:330px;top:616px;" width="17" height="20" viewBox="0 0 17 20"><polygon points="0,0 16.7,10 0,20" fill="#5a7db5"/></svg>
<div class="a" style="left:1904px;top:0px;width:16px;height:919px;background:#f1f1f1;"></div>
<div class="a" style="left:1905px;top:140px;width:13px;height:687px;background:#c1c1c1;"></div>
<svg class="a" style="left:1905px;top:4px;" width="10" height="8" viewBox="0 0 10 8"><polygon points="1,6.5 5,2 9,6.5" fill="#505050"/></svg>
<svg class="a" style="left:1905px;top:907px;" width="10" height="8" viewBox="0 0 10 8"><polygon points="1,1.5 5,6 9,1.5" fill="#505050"/></svg>
</body></html>
